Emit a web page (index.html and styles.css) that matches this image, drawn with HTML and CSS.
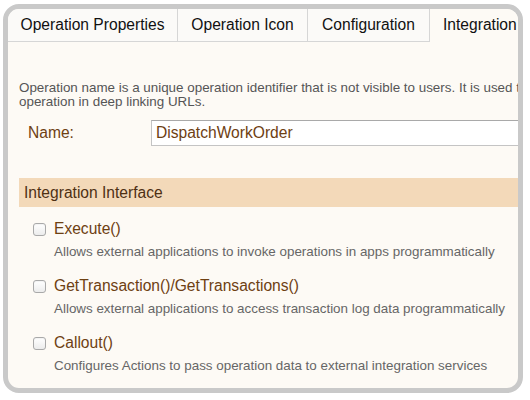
FILE: index.html
```html
<!DOCTYPE html>
<html lang="en">
<head>
    <meta charset="UTF-8">
    <title>Operation Editor</title>
    <link rel="stylesheet" href="styles.css">
</head>
<body>
    <div class="frame">
        <!-- Tab strip -->
        <div class="tabs">
            <div class="tab tab-props">Operation Properties</div>
            <div class="tab tab-icon">Operation Icon</div>
            <div class="tab tab-config">Configuration</div>
            <div class="tab tab-active">Integration</div>
        </div>

        <div class="content">
            <p class="help">Operation name is a unique operation identifier that is not visible to users. It is used to identify the<br>operation in deep linking URLs.</p>

            <div class="field">
                <label class="field-label" for="opname">Name:</label>
                <input class="field-input" id="opname" type="text" value="DispatchWorkOrder">
            </div>

            <div class="section-title">Integration Interface</div>

            <div class="option">
                <label class="option-label"><input type="checkbox" class="check"> Execute()</label>
                <div class="option-desc">Allows external applications to invoke operations in apps programmatically</div>
            </div>
            <div class="option">
                <label class="option-label"><input type="checkbox" class="check"> GetTransaction()/GetTransactions()</label>
                <div class="option-desc">Allows external applications to access transaction log data programmatically</div>
            </div>
            <div class="option">
                <label class="option-label"><input type="checkbox" class="check"> Callout()</label>
                <div class="option-desc">Configures Actions to pass operation data to external integration services</div>
            </div>
        </div>
    </div>
</body>
</html>
```

FILE: styles.css
```css
/* Page and outer rounded frame */
body {
    margin: 0;
    background-color: #fff;
    font-family: "Liberation Sans", Arial, sans-serif;
}

.frame {
    margin: 4px 7px 0 3px;
    height: 379px;
    border: 5px solid #c9c9c9;
    border-radius: 16px;
    background-color: #fdfaf5;
    overflow: hidden;
}

/* Tabs */
.tabs {
    display: flex;
    height: 33px;
    white-space: nowrap;
}

.tab {
    display: flex;
    align-items: center;
    justify-content: center;
    font-size: 15.6px;
    color: #111;
    background-color: #fbfaf8;
    border-right: 1px solid #d6d6d6;
    border-bottom: 1px solid #d6d6d6;
}

.tab-props { width: 169px; }
.tab-icon { width: 129px; }
.tab-config { width: 121px; }

.tab-active {
    flex: 1;
    justify-content: flex-start;
    padding-left: 13px;
    background-color: #fdfaf5;
    border-right: none;
    border-bottom: 1px solid #fdfaf5;
}

/* Main content */
.content {
    width: 620px;
    padding: 39px 0 0 11px;
}

.help {
    margin: 0;
    font-size: 13.4px;
    line-height: 14px;
    color: #555;
    white-space: nowrap;
}

.field {
    display: flex;
    align-items: center;
    margin-top: 11px;
}

.field-label {
    width: 123px;
    padding-left: 9px;
    font-size: 15.6px;
    color: #6e4012;
}

.field-input {
    flex: 1;
    height: 26px;
    box-sizing: border-box;
    margin: 0;
    padding: 0 4px;
    border: 1px solid #c4c4c4;
    border-top-color: #a9a9a9;
    background-color: #fff;
    font-family: "Liberation Sans", Arial, sans-serif;
    font-size: 15.6px;
    color: #6e4012;
}

/* Section header */
.section-title {
    margin-top: 32px;
    height: 29px;
    line-height: 29px;
    padding-left: 5px;
    background-color: #f3d9b9;
    font-size: 15.6px;
    color: #4e3014;
}

/* Checkbox options */
.option {
    padding-left: 14px;
    margin-top: 13px;
}

.option + .option {
    margin-top: 17px;
}

.option-label {
    display: flex;
    align-items: center;
    height: 18px;
    font-size: 15.6px;
    color: #6e4012;
}

.check {
    -webkit-appearance: none;
    appearance: none;
    width: 13px;
    height: 13px;
    margin: 0 8px 0 0;
    border: 1px solid #a9a9a9;
    border-radius: 3px;
    background: linear-gradient(#fff, #ececec);
    box-shadow: inset 0 1px 1px rgba(0,0,0,0.05);
}

.option-desc {
    margin-top: 6px;
    padding-left: 21px;
    font-size: 13.4px;
    line-height: 16px;
    color: #666;
}
```
